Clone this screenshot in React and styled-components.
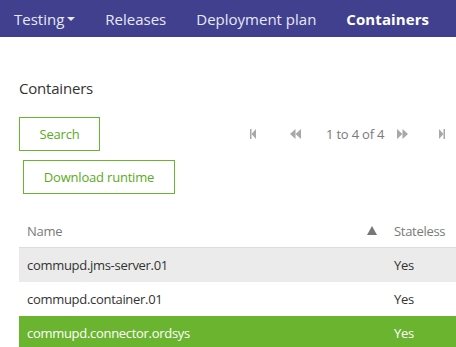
import React from 'react';
import styled, { createGlobalStyle } from 'styled-components';

const GlobalStyle = createGlobalStyle`
  body {
    margin: 0;
    font-family: "Open Sans", "Noto Sans", sans-serif;
    background: #fff;
    overflow: hidden;
  }
`;

const Page = styled.div`
  width: 456px;
  height: 347px;
  overflow: hidden;
`;

const NavBar = styled.nav`
  height: 37px;
  background-color: #40408f;
  display: flex;
  align-items: center;
  padding-left: 14px;
  gap: 30px;
  white-space: nowrap;
`;

const NavItem = styled.span`
  display: flex;
  align-items: center;
  font-size: 15px;
  letter-spacing: ${(p) => (p.$active ? '0.1px' : '0')};
  color: ${(p) => (p.$active ? '#ffffff' : '#e8e8f4')};
  font-weight: ${(p) => (p.$active ? 700 : 400)};
`;

const Caret = styled.span`
  margin-left: 3px;
  width: 0;
  height: 0;
  border-left: 4px solid transparent;
  border-right: 4px solid transparent;
  border-top: 4px solid #e8e8f4;
`;

const Content = styled.div`
  padding-left: 19px;
`;

const Heading = styled.h2`
  margin: 41px 0 0;
  font-size: 15px;
  line-height: 20px;
  font-weight: 400;
  color: #333;
  letter-spacing: -0.2px;
`;

const Toolbar = styled.div`
  display: flex;
  align-items: center;
  margin-top: 19px;
`;

const Button = styled.button`
  box-sizing: border-box;
  height: 34px;
  width: ${(p) => p.$width}px;
  margin-left: ${(p) => p.$offset || 0}px;
  background: #fff;
  border: 1px solid #6ab42f;
  color: #5aab22;
  font-family: inherit;
  font-size: 13px;
  letter-spacing: -0.2px;
  padding: 0;
  display: block;
`;

const Pager = styled.div`
  display: flex;
  align-items: center;
  margin-left: 150px;
  color: #777;
  font-size: 13px;
  letter-spacing: -0.2px;
  white-space: nowrap;
`;

const PagerIcon = styled.svg`
  display: block;
  margin-right: ${(p) => p.$gap}px;
`;

const PagerText = styled.span`
  margin-right: 13px;
  color: #7a7a7a;
`;

const DownloadRow = styled.div`
  margin-top: 9px;
`;

const Table = styled.div`
  margin-top: 20px;
  width: 480px;
`;

const Row = styled.div`
  display: grid;
  grid-template-columns: 366px 1fr;
  height: ${(p) => (p.$header ? 33 : 34)}px;
  align-items: center;
  background: ${(p) => (p.$selected ? '#6ab42f' : p.$shade ? '#ebebeb' : '#fff')};
  color: ${(p) => (p.$selected ? '#fff' : p.$header ? '#7a7a7a' : '#333')};
  border-bottom: ${(p) => (p.$header ? '1px solid #dcdcdc' : 'none')};
  font-size: 13px;
  letter-spacing: -0.3px;
`;

const NameCell = styled.div`
  padding-left: 8px;
  display: flex;
  align-items: center;
  justify-content: space-between;
  padding-right: 8px;
`;

const Cell = styled.div`
  padding-left: 9px;
`;

const SortArrow = styled.span`
  width: 0;
  height: 0;
  border-left: 5px solid transparent;
  border-right: 5px solid transparent;
  border-bottom: 9px solid #777;
`;

const First = () => (
  <PagerIcon width="6" height="10" viewBox="0 0 6 10" $gap={34}>
    <rect x="0" y="0" width="1.5" height="10" fill="#a8a8a8" />
    <polygon points="6,0 1.5,5 6,10" fill="#a8a8a8" />
  </PagerIcon>
);

const Prev = () => (
  <PagerIcon width="11" height="10" viewBox="0 0 11 10" $gap={25}>
    <polygon points="5.5,0 0,5 5.5,10" fill="#a8a8a8" />
    <polygon points="11,0 5.5,5 11,10" fill="#a8a8a8" />
  </PagerIcon>
);

const Next = () => (
  <PagerIcon width="11" height="10" viewBox="0 0 11 10" $gap={31}>
    <polygon points="0,0 5.5,5 0,10" fill="#a8a8a8" />
    <polygon points="5.5,0 11,5 5.5,10" fill="#a8a8a8" />
  </PagerIcon>
);

const Last = () => (
  <PagerIcon width="6" height="10" viewBox="0 0 6 10" $gap={0}>
    <polygon points="0,0 4.5,5 0,10" fill="#a8a8a8" />
    <rect x="4.5" y="0" width="1.5" height="10" fill="#a8a8a8" />
  </PagerIcon>
);

const rows = [
  { name: 'commupd.jms-server.01', stateless: 'Yes' },
  { name: 'commupd.container.01', stateless: 'Yes' },
  { name: 'commupd.connector.ordsys', stateless: 'Yes' },
];

export default function App() {
  return (
    <Page>
      <GlobalStyle />
      <NavBar>
        <NavItem>
          Testing
          <Caret />
        </NavItem>
        <NavItem>Releases</NavItem>
        <NavItem>Deployment plan</NavItem>
        <NavItem $active>Containers</NavItem>
      </NavBar>
      <Content>
        <Heading>Containers</Heading>
        <Toolbar>
          <Button $width={81}>Search</Button>
          <Pager>
            <First />
            <Prev />
            <PagerText>1 to 4 of 4</PagerText>
            <Next />
            <Last />
          </Pager>
        </Toolbar>
        <DownloadRow>
          <Button $width={152} $offset={4}>Download runtime</Button>
        </DownloadRow>
        <Table>
          <Row $header>
            <NameCell>
              Name
              <SortArrow />
            </NameCell>
            <Cell>Stateless</Cell>
          </Row>
          {rows.map((r, i) => (
            <Row key={r.name} $shade={i === 0} $selected={i === 2}>
              <NameCell>{r.name}</NameCell>
              <Cell>{r.stateless}</Cell>
            </Row>
          ))}
        </Table>
      </Content>
    </Page>
  );
}
